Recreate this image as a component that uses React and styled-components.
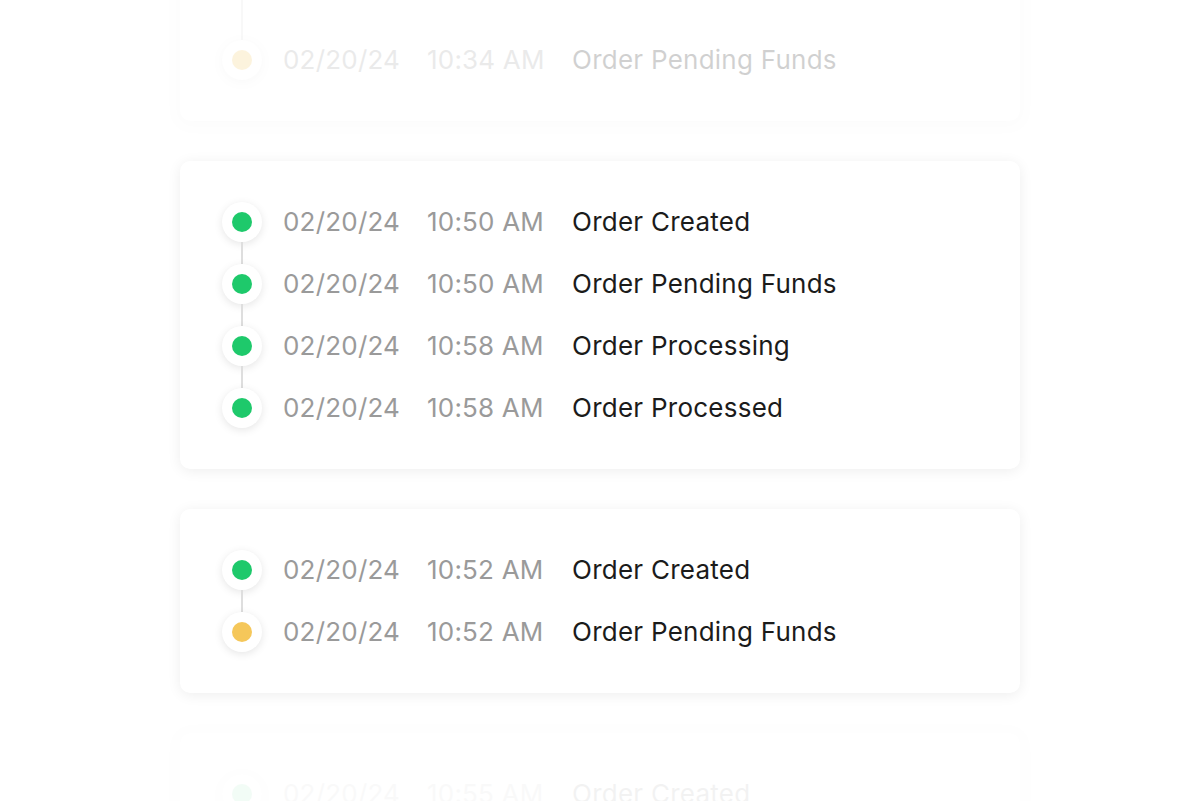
import React from 'react';
import styled, { createGlobalStyle } from 'styled-components';

const GlobalStyle = createGlobalStyle`
  html, body {
    margin: 0;
    padding: 0;
    background: #ffffff;
  }
  body {
    font-family: Inter, "Noto Sans", "Liberation Sans", sans-serif;
    -webkit-font-smoothing: antialiased;
  }
`;

const cards = [
  {
    fade: 0.2,
    continued: true,
    events: [
      { date: '02/20/24', time: '10:34 AM', label: 'Order Pending Funds', status: 'pending' },
    ],
  },
  {
    fade: 1,
    events: [
      { date: '02/20/24', time: '10:50 AM', label: 'Order Created', status: 'done' },
      { date: '02/20/24', time: '10:50 AM', label: 'Order Pending Funds', status: 'done' },
      { date: '02/20/24', time: '10:58 AM', label: 'Order Processing', status: 'done' },
      { date: '02/20/24', time: '10:58 AM', label: 'Order Processed', status: 'done' },
    ],
  },
  {
    fade: 1,
    events: [
      { date: '02/20/24', time: '10:52 AM', label: 'Order Created', status: 'done' },
      { date: '02/20/24', time: '10:52 AM', label: 'Order Pending Funds', status: 'pending' },
    ],
  },
  {
    fade: 0.05,
    events: [
      { date: '02/20/24', time: '10:55 AM', label: 'Order Created', status: 'done' },
    ],
  },
];

class App extends React.Component {
  render() {
    return (
      <Viewport>
        <GlobalStyle />
        <CardList>
          {cards.map((card, i) => (
            <Card key={i} fade={card.fade} continued={card.continued}>
              {card.continued && <LeadLine />}
              {card.events.map((ev, j) => (
                <React.Fragment key={j}>
                  {j > 0 && <Connector />}
                  <Row>
                    <DotRing>
                      <Dot status={ev.status} />
                    </DotRing>
                    <DateText>{ev.date}</DateText>
                    <TimeText>{ev.time}</TimeText>
                    <Label>{ev.label}</Label>
                  </Row>
                </React.Fragment>
              ))}
            </Card>
          ))}
        </CardList>
      </Viewport>
    );
  }
}

const Viewport = styled.div`
  height: 801px;
  overflow: hidden;
`;

const CardList = styled.div`
  width: 840px;
  margin: -22px auto 0;
  display: flex;
  flex-direction: column;
  gap: 40px;
`;

const Card = styled.div`
  background: #ffffff;
  border-radius: 10px;
  box-shadow: 0 2px 14px rgba(0, 0, 0, 0.07);
  padding: ${(p) => (p.continued ? '0 42px 41px' : '41px 42px')};
  display: flex;
  flex-direction: column;
  opacity: ${(p) => p.fade};
`;

const Row = styled.div`
  display: flex;
  align-items: center;
  height: 40px;
`;

const Connector = styled.div`
  width: 2px;
  height: 22px;
  margin-left: 19px;
  background: #dedede;
`;

const LeadLine = styled(Connector)`
  height: 62px;
`;

const DotRing = styled.div`
  width: 40px;
  height: 40px;
  flex-shrink: 0;
  border-radius: 50%;
  background: #ffffff;
  box-shadow: 0 2px 8px rgba(0, 0, 0, 0.1);
  display: flex;
  align-items: center;
  justify-content: center;
  margin-right: 21px;
`;

const Dot = styled.div`
  width: 20px;
  height: 20px;
  border-radius: 50%;
  background: ${(p) => (p.status === 'pending' ? '#f5c75a' : '#1ec96b')};
`;

const DateText = styled.span`
  width: 144px;
  font-size: 26px;
  line-height: 1;
  letter-spacing: 0.2px;
  color: #9a9a9a;
`;

const TimeText = styled(DateText)`
  width: 145px;
`;

const Label = styled.span`
  font-size: 26px;
  line-height: 1;
  letter-spacing: 0.25px;
  color: #1b1b1b;
`;

export default App;
